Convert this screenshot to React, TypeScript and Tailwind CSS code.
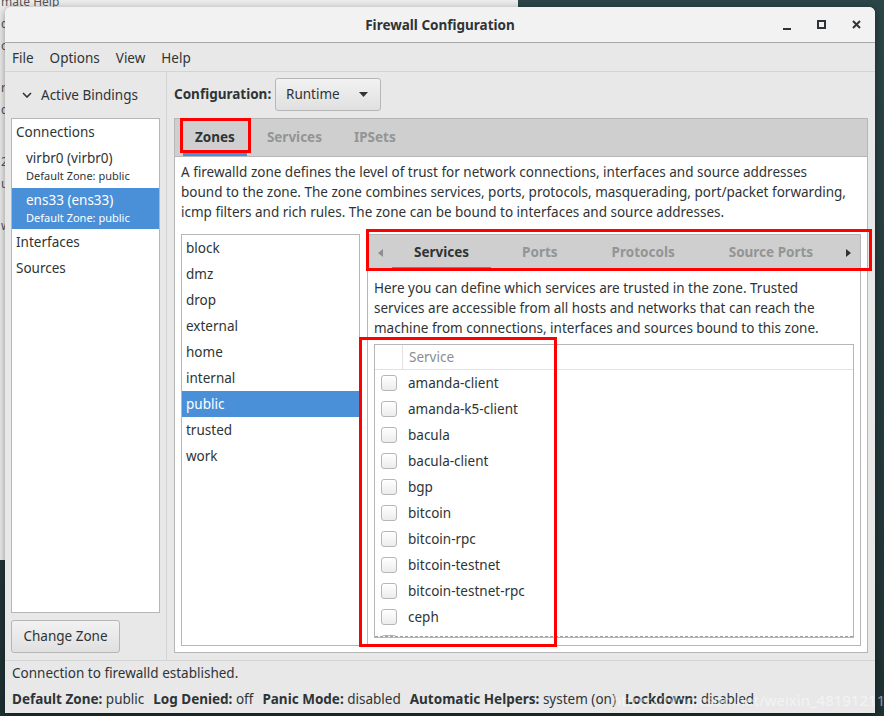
import React from "react";

const zones = ["block", "dmz", "drop", "external", "home", "internal", "public", "trusted", "work"];

const services = [
  "amanda-client",
  "amanda-k5-client",
  "bacula",
  "bacula-client",
  "bgp",
  "bitcoin",
  "bitcoin-rpc",
  "bitcoin-testnet",
  "bitcoin-testnet-rpc",
  "ceph",
  "ceph-mon",
];

const statusItems: [string, string][] = [
  ["Default Zone:", "public"],
  ["Log Denied:", "off"],
  ["Panic Mode:", "disabled"],
  ["Automatic Helpers:", "system (on)"],
  ["Lockdown:", "disabled"],
];

const zoneText = [
  "A firewalld zone defines the level of trust for network connections, interfaces and source addresses",
  "bound to the zone. The zone combines services, ports, protocols, masquerading, port/packet forwarding,",
  "icmp filters and rich rules. The zone can be bound to interfaces and source addresses.",
];

const serviceText = [
  "Here you can define which services are trusted in the zone. Trusted",
  "services are accessible from all hosts and networks that can reach the",
  "machine from connections, interfaces and sources bound to this zone.",
];

function Checkbox() {
  return (
    <span className="block h-[16px] w-[16px] shrink-0 rounded-[3px] border border-[#b6b6b6] bg-gradient-to-b from-white to-[#ececec]" />
  );
}

function TitleBar() {
  return (
    <div className="relative flex h-[36px] shrink-0 items-center justify-center border-b border-[#a8a8a8] bg-[#f2f2f2] pt-[1px]">
      <span className="text-[13.5px] font-bold text-[#2e3436]">Firewall Configuration</span>
      <div className="absolute right-[14px] top-0 flex h-full items-center gap-[26px]">
        <span className="mt-[8px] block h-[2px] w-[8px] bg-[#2e3436]" />
        <span className="block h-[9px] w-[9px] border-2 border-[#2e3436]" />
        <svg width="9" height="9" viewBox="0 0 9 9">
          <path d="M1 1 L8 8 M8 1 L1 8" stroke="#2e3436" strokeWidth="2" />
        </svg>
      </div>
    </div>
  );
}

function MenuBar() {
  return (
    <div className="flex h-[29px] shrink-0 items-center gap-[16px] border-b border-[#d4d4d4] pl-[7px] pt-[2px] text-[13.5px] text-[#2e3436]">
      <span>File</span>
      <span>Options</span>
      <span>View</span>
      <span>Help</span>
    </div>
  );
}

function LeftPane() {
  return (
    <div className="flex w-[162px] shrink-0 flex-col border-r border-[#d4d4d4] px-[6px] pb-[7px] pt-[12px]">
      <div className="flex h-[22px] items-center gap-[9px] pl-[11px] text-[13.5px] text-[#2e3436]">
        <svg width="10" height="6" viewBox="0 0 10 6">
          <polyline points="1,1 5,5 9,1" fill="none" stroke="#2e3436" strokeWidth="1.6" />
        </svg>
        <span>Active Bindings</span>
      </div>
      <div className="mt-[12px] min-h-0 flex-1 border border-[#b6b6b6] bg-white text-[13.5px] text-[#2e3436]">
        <div className="flex h-[27px] items-center pl-[4px]">Connections</div>
        <div className="flex h-[42px] flex-col justify-center pl-[14px] leading-[18px]">
          <span>virbr0 (virbr0)</span>
          <span className="text-[11px]">Default Zone: public</span>
        </div>
        <div className="flex h-[41px] flex-col justify-center bg-[#4a90d9] pl-[14px] leading-[18px] text-white">
          <span>ens33 (ens33)</span>
          <span className="text-[11px]">Default Zone: public</span>
        </div>
        <div className="flex h-[26px] items-center pl-[4px]">Interfaces</div>
        <div className="flex h-[26px] items-center pl-[4px]">Sources</div>
      </div>
      <button className="mt-[7px] h-[33px] w-[109px] shrink-0 rounded-[3px] border border-[#b6b6b6] bg-gradient-to-b from-[#f2f2f2] to-[#e0e0e0] text-[13.5px] text-[#2e3436]">
        Change Zone
      </button>
    </div>
  );
}

function ServiceList() {
  return (
    <div className="relative mt-[6px] min-h-0 flex-1 overflow-hidden border border-[#b6b6b6] bg-white text-[13.5px] text-[#2e3436]">
      <div className="flex h-[25px] border-b border-[#e2e2e2]">
        <div className="w-[28px] border-r border-[#e2e2e2]" />
        <div className="flex items-center pl-[6px] text-[#8b8e8f]">Service</div>
      </div>
      {services.map((s) => (
        <div key={s} className="flex h-[26px] items-center gap-[11px] pl-[6px]">
          <Checkbox />
          <span>{s}</span>
        </div>
      ))}
      <div className="absolute bottom-0 left-0 right-0 h-[1px] border-t border-dashed border-[#a0a0a0]" />
    </div>
  );
}

function InnerNotebook() {
  const tabs = ["Services", "Ports", "Protocols", "Source Ports"];
  return (
    <div className="flex min-h-0 min-w-0 flex-1 flex-col border border-[#b6b6b6]">
      <div className="flex h-[36px] shrink-0 items-stretch border-b border-[#b6b6b6] bg-[#cfcfcf]">
        <div className="flex w-[24px] items-center justify-center">
          <svg width="5" height="8" viewBox="0 0 5 8">
            <polygon points="5,0 0,4 5,8" fill="#8b8e8f" />
          </svg>
        </div>
        <div className="flex flex-1 gap-[8px] overflow-hidden">
          {tabs.map((t, i) => (
            <div
              key={t}
              className={
                i === 0
                  ? "flex items-center whitespace-nowrap border-b-[3px] border-[#4a90d9] px-[22px] pt-[3px] text-[13.5px] font-bold text-[#2e3436]"
                  : "flex items-center whitespace-nowrap px-[23px] text-[13.5px] font-bold text-[#929595]"
              }
            >
              {t}
            </div>
          ))}
        </div>
        <div className="flex w-[24px] items-center justify-center">
          <svg width="5" height="8" viewBox="0 0 5 8">
            <polygon points="0,0 5,4 0,8" fill="#2e3436" />
          </svg>
        </div>
      </div>
      <div className="flex min-h-0 flex-1 flex-col bg-white px-[6px] pb-[7px] pt-[7px]">
        <p className="whitespace-nowrap text-[13.5px] leading-[20px] text-[#2e3436]">
          {serviceText.map((l) => (
            <span key={l} className="block">
              {l}
            </span>
          ))}
        </p>
        <ServiceList />
      </div>
    </div>
  );
}

function RightPane() {
  return (
    <div className="flex min-h-0 min-w-0 flex-1 flex-col pb-[7px] pl-[7px] pr-[7px] pt-[6px]">
      <div className="flex h-[33px] shrink-0 items-center">
        <span className="w-[101px] text-[13.5px] font-bold text-[#2e3436]">Configuration:</span>
        <div className="flex h-[33px] w-[106px] items-center justify-between rounded-[3px] border border-[#b6b6b6] bg-gradient-to-b from-[#f2f2f2] to-[#e0e0e0] pl-[10px] pr-[12px] text-[13.5px] text-[#2e3436]">
          <span>Runtime</span>
          <svg width="9" height="5" viewBox="0 0 9 5">
            <polygon points="0,0 9,0 4.5,5" fill="#2e3436" />
          </svg>
        </div>
      </div>
      <div className="mt-[7px] flex min-h-0 flex-1 flex-col border border-[#b6b6b6]">
        <div className="flex h-[38px] shrink-0 gap-[8px] border-b border-[#b6b6b6] bg-[#cfcfcf] pl-[8px]">
          <div className="flex items-center border-b-[3px] border-[#4a90d9] px-[12px] pt-[3px] text-[13.5px] font-bold text-[#2e3436]">
            Zones
          </div>
          <div className="flex items-center px-[12px] text-[13.5px] font-bold text-[#929595]">Services</div>
          <div className="flex items-center px-[12px] text-[13.5px] font-bold text-[#929595]">IPSets</div>
        </div>
        <div className="flex min-h-0 flex-1 flex-col bg-white px-[6px] pb-[6px] pt-[5px]">
          <p className="whitespace-nowrap text-[13.5px] leading-[20px] text-[#2e3436]">
            {zoneText.map((l) => (
              <span key={l} className="block">
                {l}
              </span>
            ))}
          </p>
          <div className="mt-[12px] flex min-h-0 flex-1 gap-[7px]">
            <div className="w-[179px] shrink-0 border border-[#b6b6b6] bg-white text-[13.5px] text-[#2e3436]">
              {zones.map((z) => (
                <div
                  key={z}
                  className={
                    z === "public"
                      ? "flex h-[26px] items-center bg-[#4a90d9] pl-[4px] text-white"
                      : "flex h-[26px] items-center pl-[4px]"
                  }
                >
                  {z}
                </div>
              ))}
            </div>
            <InnerNotebook />
          </div>
        </div>
      </div>
    </div>
  );
}

function StatusBar() {
  return (
    <div className="h-[53px] shrink-0 border-t border-[#d4d4d4] pl-[7px] pt-[2px] text-[13.5px] leading-[20px] text-[#2e3436]">
      <div>Connection to firewalld established.</div>
      <div className="mt-[6px] flex gap-[9px] whitespace-nowrap">
        {statusItems.map(([k, v]) => (
          <span key={k}>
            <span className="font-bold">{k}</span> {v}
          </span>
        ))}
      </div>
    </div>
  );
}

export default function App() {
  return (
    <div className="relative h-[716px] w-[884px] overflow-hidden bg-gradient-to-b from-[#2b4548] to-[#1f3133] font-['Noto_Sans',sans-serif]">
      <div className="absolute left-0 top-0 h-[560px] w-[518px] bg-[#ececec] pl-[1px] text-[12px] leading-[22px] text-[#555]">
        <div className="-mt-[9px]">mate Help</div>
        <div>c</div>
        <div>o</div>
        <div className="mt-[20px]">r</div>
        <div>c</div>
        <div className="mt-[30px]">2</div>
        <div>u</div>
        <div className="mt-[20px]">w</div>
      </div>

      <div className="absolute left-[5px] top-[7px] flex h-[706px] w-[870px] flex-col overflow-hidden rounded-t-[6px] bg-[#e8e8e8] shadow-[0_2px_8px_rgba(0,0,0,0.4)]">
        <TitleBar />
        <MenuBar />
        <div className="flex h-[588px] shrink-0 overflow-hidden">
          <LeftPane />
          <RightPane />
        </div>
        <StatusBar />
      </div>

      <div className="absolute left-[612px] top-[689px] text-[15px] text-white/50">https://blog.csdn.net/weixin_48191211</div>

      <div className="absolute left-[180px] top-[118px] h-[35px] w-[71px] border-[3px] border-[#f00]" />
      <div className="absolute left-[366px] top-[229px] h-[42px] w-[506px] border-[3px] border-[#f00]" />
      <div className="absolute left-[359px] top-[337px] h-[310px] w-[198px] border-[3px] border-[#f00]" />
    </div>
  );
}
